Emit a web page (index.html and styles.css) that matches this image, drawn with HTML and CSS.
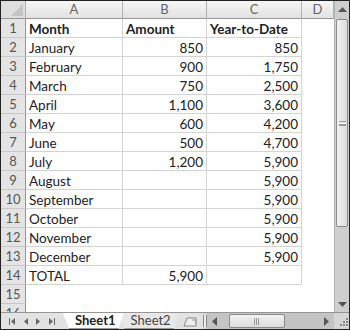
FILE: index.html
```html
<!DOCTYPE html>
<html lang="en">

<head>
  <meta charset="UTF-8">
  <link rel="stylesheet" href="styles.css">
</head>

<body>
  <div class="window">
    <div class="main">
      <div class="sheet">
        <div class="corner"><span class="corner-tri"></span></div>
        <div class="colh">A</div>
        <div class="colh">B</div>
        <div class="colh">C</div>
        <div class="colh">D</div>

        <div class="rowh">1</div><div class="c b">Month</div><div class="c b">Amount</div><div class="c b">Year-to-Date</div><div></div>
        <div class="rowh">2</div><div class="c">January</div><div class="c n">850</div><div class="c n">850</div><div></div>
        <div class="rowh">3</div><div class="c">February</div><div class="c n">900</div><div class="c n">1,750</div><div></div>
        <div class="rowh">4</div><div class="c">March</div><div class="c n">750</div><div class="c n">2,500</div><div></div>
        <div class="rowh">5</div><div class="c">April</div><div class="c n">1,100</div><div class="c n">3,600</div><div></div>
        <div class="rowh">6</div><div class="c">May</div><div class="c n">600</div><div class="c n">4,200</div><div></div>
        <div class="rowh">7</div><div class="c">June</div><div class="c n">500</div><div class="c n">4,700</div><div></div>
        <div class="rowh">8</div><div class="c">July</div><div class="c n">1,200</div><div class="c n">5,900</div><div></div>
        <div class="rowh">9</div><div class="c">August</div><div class="c n"></div><div class="c n">5,900</div><div></div>
        <div class="rowh">10</div><div class="c">September</div><div class="c n"></div><div class="c n">5,900</div><div></div>
        <div class="rowh">11</div><div class="c">October</div><div class="c n"></div><div class="c n">5,900</div><div></div>
        <div class="rowh">12</div><div class="c">November</div><div class="c n"></div><div class="c n">5,900</div><div></div>
        <div class="rowh">13</div><div class="c">December</div><div class="c n"></div><div class="c n">5,900</div><div></div>
        <div class="rowh">14</div><div class="c">TOTAL</div><div class="c n">5,900</div><div class="c n"></div><div></div>
        <div class="rowh">15</div><div></div><div></div><div></div><div></div>
        <div class="rowh">16</div><div></div><div></div><div></div><div></div>
      </div>

      <div class="vscroll">
        <div class="sb-btn">
          <svg width="9" height="5" viewBox="0 0 9 5"><polygon points="0,5 9,5 4.5,0" fill="#555"/></svg>
        </div>
        <div class="vtrack">
          <div class="vthumb"><span class="grip-h"></span></div>
        </div>
        <div class="sb-btn">
          <svg width="9" height="5" viewBox="0 0 9 5"><polygon points="0,0 9,0 4.5,5" fill="#555"/></svg>
        </div>
      </div>
    </div>

    <div class="bottom">
      <div class="nav">
        <svg width="8" height="7" viewBox="0 0 8 7"><rect x="0" y="0" width="1" height="7" fill="#666"/><polygon points="2,3.5 6,0 6,7" fill="#666"/></svg>
        <svg width="5" height="7" viewBox="0 0 5 7"><polygon points="0,3.5 4,0 4,7" fill="#666"/></svg>
        <svg width="5" height="7" viewBox="0 0 5 7"><polygon points="0,0 4,3.5 0,7" fill="#666"/></svg>
        <svg width="8" height="7" viewBox="0 0 8 7"><polygon points="1,0 5,3.5 1,7" fill="#666"/><rect x="6" y="0" width="1" height="7" fill="#666"/></svg>
      </div>
      <div class="tabs">
        <div class="tab active">Sheet1</div>
        <div class="tab">Sheet2</div>
        <div class="tab-new">
          <svg width="16" height="12" viewBox="0 0 16 12"><path d="M1 11 L4 3 H13 L13 11 Z" fill="#eee" stroke="#888"/><path d="M9 5 h4 v4" fill="none" stroke="#999"/></svg>
        </div>
      </div>
      <div class="split"></div>
      <div class="hscroll">
        <div class="hbtn">
          <svg width="5" height="9" viewBox="0 0 5 9"><polygon points="5,0 5,9 0,4.5" fill="#555"/></svg>
        </div>
        <div class="htrack">
          <div class="hthumb"><span class="grip-v"></span></div>
        </div>
        <div class="hbtn">
          <svg width="5" height="9" viewBox="0 0 5 9"><polygon points="0,0 0,9 5,4.5" fill="#555"/></svg>
        </div>
      </div>
      <div class="resize">
        <svg width="12" height="12" viewBox="0 0 12 12" fill="#888">
          <rect x="9" y="1" width="2" height="2"/><rect x="6" y="4" width="2" height="2"/><rect x="9" y="4" width="2" height="2"/>
          <rect x="3" y="7" width="2" height="2"/><rect x="6" y="7" width="2" height="2"/><rect x="9" y="7" width="2" height="2"/>
        </svg>
      </div>
    </div>
  </div>
</body>

</html>
```

FILE: styles.css
```css
*,
*::before,
*::after {
  box-sizing: border-box;
}

:root {
  --grid-line: rgb(212, 212, 212);
  --head-bg: rgb(228, 228, 228);
  --head-line: rgb(176, 176, 176);
}

body {
  margin: 0;
  font-family: Lato, "Liberation Sans", sans-serif;
  font-size: 13.5px;
  color: #222;
}

.window {
  width: 350px;
  height: 330px;
  border: 1px solid #222;
  display: flex;
  flex-direction: column;
  background: #fff;
  overflow: hidden;
}

.main {
  display: flex;
  height: 311px;
}

.sheet {
  display: grid;
  grid-template-columns: 25px 97px 84px 95px 32px;
  grid-template-rows: 18px repeat(15, 19px) 1fr;
  width: 333px;
  overflow: hidden;
}

.corner {
  background: rgb(222, 222, 222);
  border-right: 1px solid var(--head-line);
  border-bottom: 1px solid rgb(150, 150, 150);
  display: flex;
  align-items: flex-end;
  justify-content: flex-end;
  padding: 0 2px 2px 0;
}

.corner-tri {
  width: 12px;
  height: 12px;
  background: rgb(196, 196, 196);
  clip-path: polygon(100% 0, 100% 100%, 0 100%);
}

.colh {
  background: linear-gradient(#f6f6f6, #e2e2e2);
  border-right: 1px solid var(--head-line);
  border-bottom: 1px solid rgb(150, 150, 150);
  text-align: center;
  color: #666;
  font-size: 13px;
  line-height: 17px;
}

.rowh {
  background: var(--head-bg);
  border-right: 1px solid rgb(150, 150, 150);
  border-bottom: 1px solid rgb(200, 200, 200);
  text-align: center;
  color: #555;
  font-size: 13px;
  line-height: 19px;
}

.c {
  border-right: 1px solid var(--grid-line);
  border-bottom: 1px solid var(--grid-line);
  padding: 1px 3px 0 3px;
  line-height: 18px;
  white-space: nowrap;
}

.c.b {
  font-weight: bold;
}

.c.n {
  text-align: right;
}

/* vertical scrollbar */
.vscroll {
  width: 15px;
  display: flex;
  flex-direction: column;
  background: rgb(206, 206, 206);
  border-left: 1px solid rgb(180, 180, 180);
}

.sb-btn {
  height: 16px;
  display: flex;
  align-items: center;
  justify-content: center;
}

.vtrack {
  flex: 1;
  padding: 2px 1px;
}

.vthumb {
  height: 208px;
  background: linear-gradient(90deg, #f2f2f2, #dcdcdc);
  border: 1px solid rgb(140, 140, 140);
  border-radius: 2px;
  display: flex;
  align-items: center;
  justify-content: center;
}

.grip-h {
  width: 7px;
  height: 5px;
  border-top: 1px solid #999;
  border-bottom: 1px solid #999;
  background: linear-gradient(#fff 0 1px, #999 1px 2px, transparent 2px);
  background-position: 0 1px;
  background-repeat: no-repeat;
}

/* bottom bar */
.bottom {
  flex: 1;
  display: flex;
  align-items: stretch;
  background: rgb(214, 214, 214);
  border-top: 1px solid rgb(150, 150, 150);
}

.nav {
  width: 62px;
  display: flex;
  align-items: center;
  justify-content: space-around;
  padding: 0 4px;
  background: rgb(226, 226, 226);
}

.tabs {
  display: flex;
  align-items: stretch;
  background: rgb(226, 226, 226);
}

.tab {
  padding: 0 8px 0 12px;
  margin-left: -5px;
  font-size: 13px;
  line-height: 15px;
  color: #444;
  background: rgb(232, 232, 232);
  clip-path: polygon(0 0, 100% 0, calc(100% - 5px) 100%, 6px 100%);
  border-bottom: 1px solid #999;
}

.tab:first-child {
  margin-left: 0;
}

.tab.active {
  background: #fff;
  color: #222;
  font-weight: bold;
  z-index: 1;
}

.tab-new {
  width: 24px;
  display: flex;
  align-items: center;
  justify-content: center;
}

.split {
  width: 4px;
  border-left: 1px solid #888;
  border-right: 1px solid #888;
  background: #eee;
  margin: 2px 0;
}

.hscroll {
  flex: 1;
  display: flex;
  align-items: stretch;
  background: rgb(196, 196, 196);
}

.hbtn {
  width: 16px;
  display: flex;
  align-items: center;
  justify-content: center;
}

.htrack {
  flex: 1;
  padding: 1px 2px;
}

.hthumb {
  width: 56px;
  height: 100%;
  margin-left: 4px;
  background: linear-gradient(#f2f2f2, #dcdcdc);
  border: 1px solid rgb(140, 140, 140);
  border-radius: 2px;
  display: flex;
  align-items: center;
  justify-content: center;
}

.grip-v {
  width: 5px;
  height: 7px;
  border-left: 1px solid #999;
  border-right: 1px solid #999;
  background: linear-gradient(90deg, transparent 1px, #999 1px 2px, transparent 2px);
}

.resize {
  width: 15px;
  display: flex;
  align-items: flex-end;
  justify-content: flex-end;
  background: rgb(214, 214, 214);
}
```
